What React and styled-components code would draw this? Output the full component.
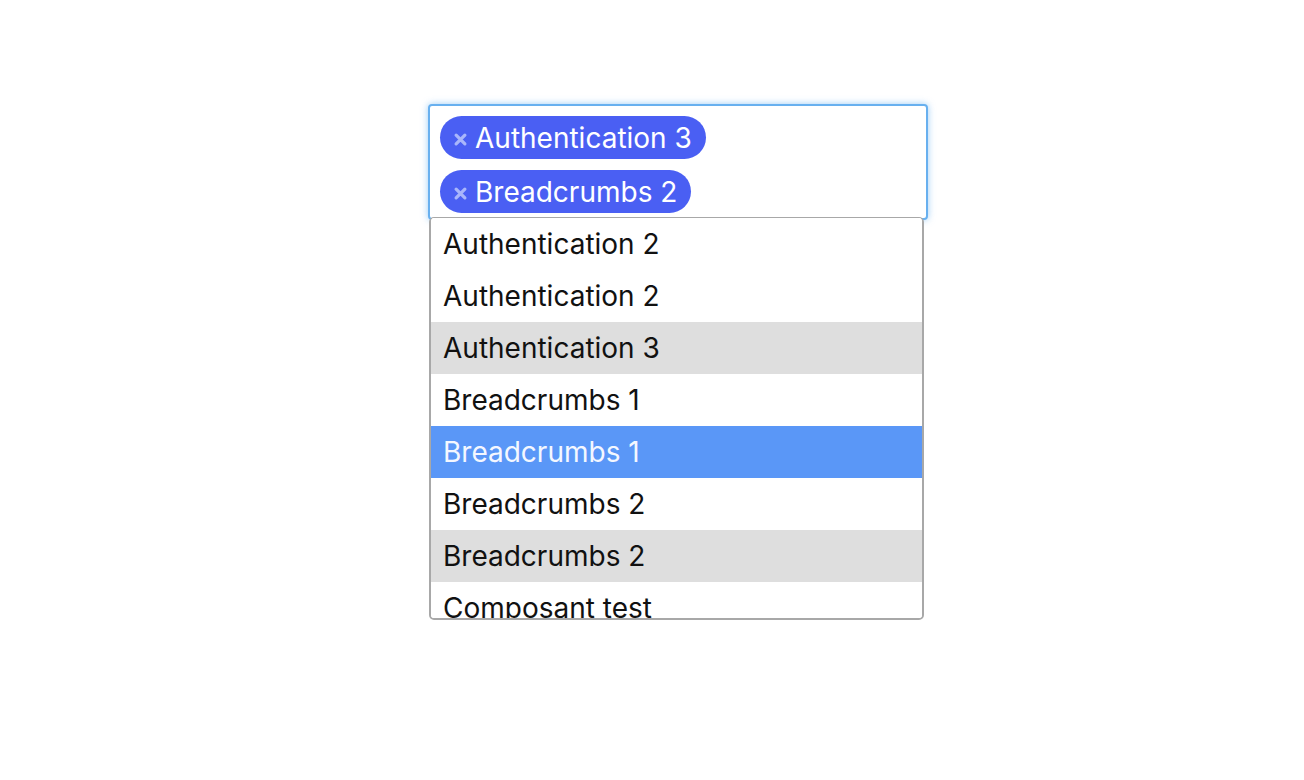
import React from 'react';
import styled, { createGlobalStyle } from 'styled-components';

const GlobalStyle = createGlobalStyle`
  html, body {
    margin: 0;
    padding: 0;
    background: #ffffff;
  }
  body {
    font-family: 'Inter', 'Noto Sans', sans-serif;
  }
`;

const Page = styled.div`
  padding: 104px 0 0 428px;
`;

const Select = styled.div`
  width: 500px;
`;

const Control = styled.div`
  box-sizing: border-box;
  width: 500px;
  min-height: 115px;
  display: flex;
  flex-wrap: wrap;
  align-content: flex-start;
  gap: 11px;
  padding: 10px 10px 5px 10px;
  border: 2px solid #68b0ef;
  border-radius: 4px;
  box-shadow: 0 0 7px rgba(90, 170, 240, 0.6);
  background: #fff;
  position: relative;
  z-index: 1;
`;

const Chip = styled.span`
  display: inline-flex;
  align-items: center;
  gap: 7px;
  height: 43px;
  padding: 0 14px 0 13px;
  border-radius: 22px;
  background: #4a5ff3;
  color: #ffffff;
  font-size: 28px;
  line-height: 1;
`;

const Remove = styled.svg`
  width: 15px;
  height: 15px;
  flex: none;
  margin-top: 3px;
`;

const Menu = styled.ul`
  box-sizing: border-box;
  list-style: none;
  margin: -3px 0 0 1px;
  padding: 0;
  width: 495px;
  height: 403px;
  overflow: hidden;
  border: 2px solid #a8a8a8;
  border-top-width: 1px;
  border-radius: 5px;
  background: #fff;
  position: relative;
  z-index: 2;
`;

const Option = styled.li`
  height: 52px;
  display: flex;
  align-items: center;
  padding: 0 12px;
  font-size: 28px;
  white-space: nowrap;
  color: ${p => (p.$active ? '#f4f7ff' : '#111111')};
  background: ${p => (p.$active ? '#5a97f7' : p.$selected ? '#dedede' : '#ffffff')};
`;

const CloseIcon = () => (
  <Remove viewBox="0 0 12 12">
    <path d="M2.5 2.5 L9.5 9.5 M9.5 2.5 L2.5 9.5" stroke="#a9b6fb" strokeWidth="2.6" strokeLinecap="round" />
  </Remove>
);

const chips = ['Authentication 3', 'Breadcrumbs 2'];

const options = [
  { label: 'Authentication 2' },
  { label: 'Authentication 2' },
  { label: 'Authentication 3', selected: true },
  { label: 'Breadcrumbs 1' },
  { label: 'Breadcrumbs 1', active: true },
  { label: 'Breadcrumbs 2' },
  { label: 'Breadcrumbs 2', selected: true },
  { label: 'Composant test' },
];

export default function App() {
  return (
    <>
      <GlobalStyle />
      <Page>
        <Select>
          <Control>
            {chips.map(c => (
              <Chip key={c}>
                <CloseIcon />
                {c}
              </Chip>
            ))}
          </Control>
          <Menu>
            {options.map((o, i) => (
              <Option key={i} $selected={o.selected} $active={o.active}>
                {o.label}
              </Option>
            ))}
          </Menu>
        </Select>
      </Page>
    </>
  );
}
